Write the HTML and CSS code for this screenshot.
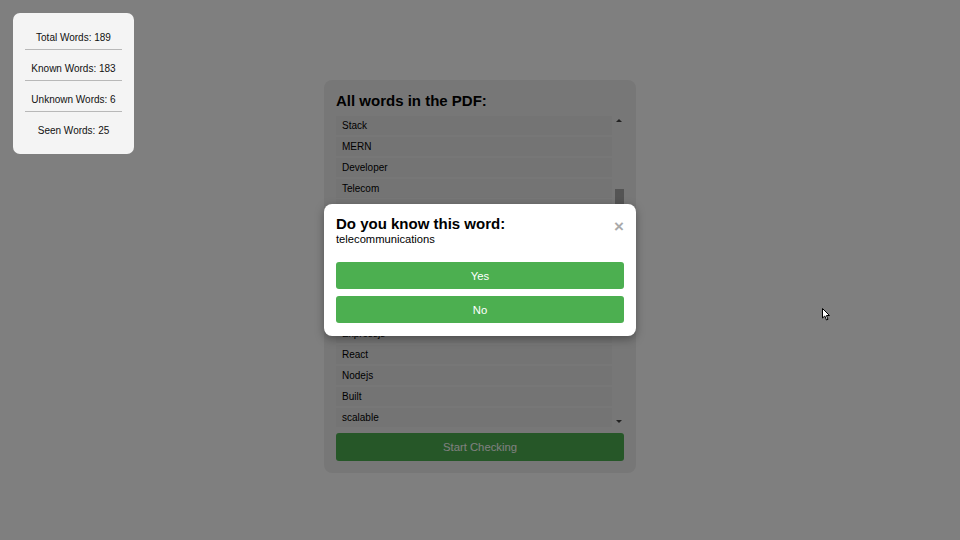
FILE: index.html
```html
<!DOCTYPE html>
<html>
<head>
<meta charset="utf-8">
<link rel="stylesheet" href="styles.css">
</head>
<body>
<div class="stats">
  <div class="stat">Total Words: 189</div>
  <div class="stat">Known Words: 183</div>
  <div class="stat">Unknown Words: 6</div>
  <div class="stat">Seen Words: 25</div>
</div>

<main class="stage">
  <section class="panel">
    <h2 class="panel-title">All words in the PDF:</h2>
    <div class="list-wrap">
      <ul class="word-list">
        <li>Stack</li>
        <li>MERN</li>
        <li>Developer</li>
        <li>Telecom</li>
        <li>telecommunications</li>
        <li>JavaScript</li>
        <li>MongoDB</li>
        <li>Experience</li>
        <li>Applications</li>
        <li>Web</li>
        <li>Expressjs</li>
        <li>React</li>
        <li>Nodejs</li>
        <li>Built</li>
        <li>scalable</li>
      </ul>
      <div class="scrollbar">
        <span class="arrow up"></span>
        <div class="track"><div class="thumb"></div></div>
        <span class="arrow down"></span>
      </div>
    </div>
    <button class="start-btn">Start Checking</button>
  </section>
</main>

<div class="overlay"></div>

<div class="modal">
  <button class="close">&times;</button>
  <h2 class="modal-title">Do you know this word:</h2>
  <p class="modal-word">telecommunications</p>
  <div class="modal-actions">
    <button class="answer">Yes</button>
    <button class="answer">No</button>
  </div>
</div>

<svg class="cursor" width="9" height="13" viewBox="0 0 9 13"><path d="M0.5 0.5 L0.5 10 L2.8 8 L4.5 12 L6 11.3 L4.4 7.5 L7.5 7.5 Z" fill="#fff" stroke="#000" stroke-width="1"/></svg>
</body>
</html>
```
FILE: styles.css
```css
* { box-sizing: border-box; }
html, body { margin: 0; padding: 0; }
body {
  width: 960px;
  height: 540px;
  background: #ffffff;
  font-family: "Liberation Sans", Arial, sans-serif;
  color: #111;
  position: relative;
  overflow: hidden;
}

.stats {
  position: absolute;
  left: 13px;
  top: 13px;
  width: 121px;
  height: 141px;
  background: #f4f4f4;
  border-radius: 7px;
  padding: 14px 12px 12px;
  z-index: 20;
  display: flex;
  flex-direction: column;
}
.stat {
  font-size: 10px;
  text-align: center;
  color: #111;
  line-height: 12px;
  padding: 5px 0 5px;
  border-bottom: 1px solid #b8b8b8;
  margin-bottom: 8px;
}
.stat:last-child { border-bottom: none; }

.stage {
  display: flex;
  justify-content: center;
  padding-top: 80px;
}
.panel {
  width: 312px;
  height: 393px;
  background: #efefef;
  border-radius: 8px;
  padding: 11px 12px 12px;
  display: flex;
  flex-direction: column;
}
.panel-title {
  margin: 0 0 4px;
  font-size: 15px;
  line-height: 20px;
  font-weight: bold;
  color: #000;
}
.list-wrap {
  display: flex;
  height: 314px;
  overflow: hidden;
}
.word-list {
  list-style: none;
  margin: 0;
  padding: 1px 0 0;
  flex: 1;
  margin-right: 2px;
}
.word-list li {
  font-size: 10px;
  line-height: 13px;
  padding: 3px 6px;
  background: #e9e9e9;
  margin-bottom: 1.85px;
  color: #000;
}
.scrollbar {
  width: 10px;
  display: flex;
  flex-direction: column;
  align-items: center;
}
.arrow {
  width: 0; height: 0;
  border-left: 3px solid transparent;
  border-right: 3px solid transparent;
  margin: 4px 0;
}
.arrow.up { border-bottom: 3px solid #444; }
.arrow.down { border-top: 3px solid #444; }
.track { flex: 1; width: 10px; padding-top: 63px; }
.thumb { width: 9px; height: 60px; background: #a8a8a8; margin: 0 auto; }

.start-btn {
  margin-top: 6px;
  height: 28px;
  border: none;
  border-radius: 3px;
  background: #4caf50;
  color: #fff;
  font-family: inherit;
  font-size: 11.3px;
}

.overlay {
  position: absolute;
  inset: 0;
  background: rgba(0, 0, 0, 0.5);
  z-index: 10;
}

.modal {
  position: absolute;
  left: 324px;
  top: 204px;
  width: 312px;
  height: 132px;
  background: #fff;
  border-radius: 8px;
  box-shadow: 0 3px 10px rgba(0,0,0,0.35);
  padding: 11px 12px 12px;
  z-index: 30;
}
.close {
  position: absolute;
  right: 12px;
  top: 14px;
  border: none;
  background: none;
  padding: 0;
  font-size: 17px;
  line-height: 18px;
  font-weight: bold;
  color: #aaa;
  font-family: inherit;
}
.modal-title {
  margin: 0;
  font-size: 15px;
  line-height: 17px;
  font-weight: bold;
  color: #000;
}
.modal-word {
  margin: 0;
  font-size: 11.2px;
  line-height: 14px;
  color: #000;
}
.modal-actions {
  margin-top: 16px;
  display: flex;
  flex-direction: column;
  gap: 7px;
}
.answer {
  height: 27px;
  border: none;
  border-radius: 3px;
  background: #4caf50;
  color: #fff;
  font-family: inherit;
  font-size: 11.3px;
}

.cursor {
  position: absolute;
  left: 822px;
  top: 308px;
  z-index: 40;
}
```
